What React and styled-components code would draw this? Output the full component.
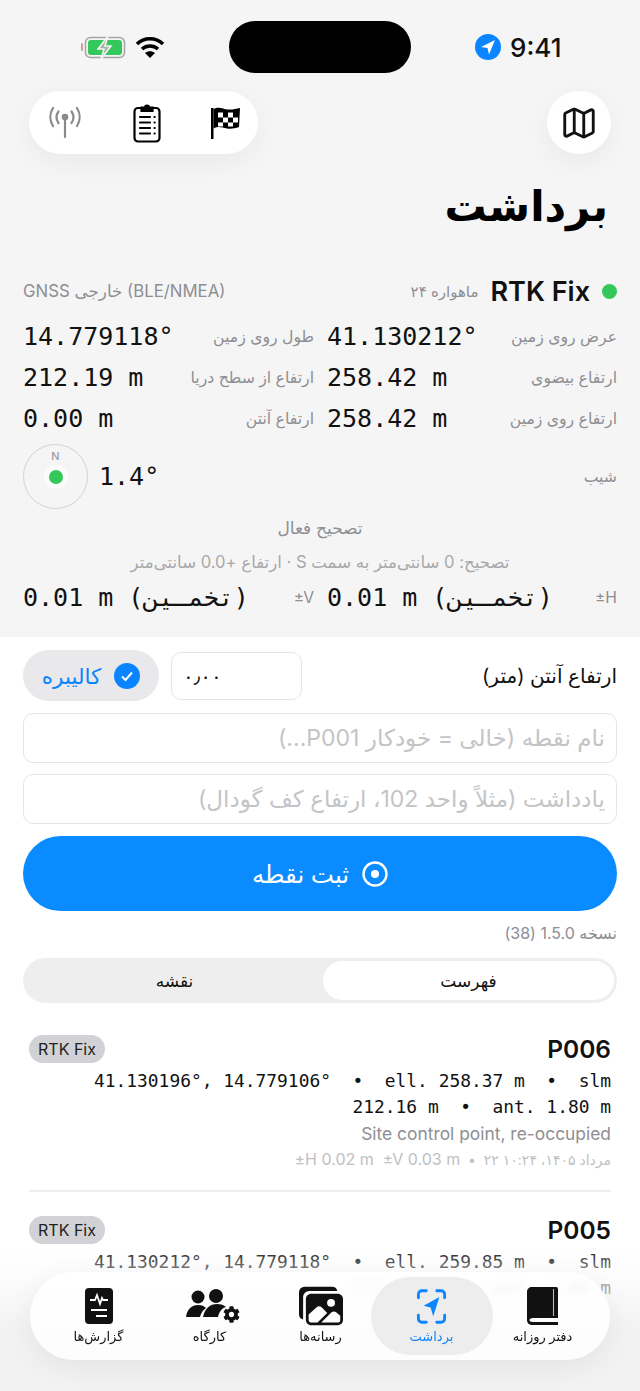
import React from "react";
import styled, { createGlobalStyle } from "styled-components";
import { FaCog } from "react-icons/fa";
import { IoImages } from "react-icons/io5";
import { LuMap } from "react-icons/lu";

const sans = `Inter, "DejaVu Sans", sans-serif`;
const mono = `"DejaVu Sans Mono", "Liberation Mono", monospace`;

const GlobalStyle = createGlobalStyle`
  html, body { margin: 0; padding: 0; background: #fff; }
  * { box-sizing: border-box; }
  input::placeholder { color: #c4c4c6; opacity: 1; }
`;

const Screen = styled.div`
  position: relative;
  width: 640px;
  height: 1391px;
  overflow: hidden;
  background: #fff;
  font-family: ${sans};
  direction: rtl;
`;

const Top = styled.div`
  height: 637px;
  background: #f5f5f5;
  padding: 0 23px;
`;

const StatusBar = styled.div`
  direction: ltr;
  height: 91px;
  display: flex;
  justify-content: center;
  align-items: flex-start;
  padding-top: 21px;
`;

const StatusSide = styled.div`
  width: 206px;
  height: 52px;
  display: flex;
  align-items: center;
  gap: ${(p) => p.$gap}px;
  padding-left: ${(p) => p.$pad}px;
`;

const Island = styled.div`
  width: 182px;
  height: 52px;
  border-radius: 26px;
  background: #000;
`;

const Clock = styled.span`
  font-size: 26px;
  font-weight: 500;
  color: #111;
`;

const NavRow = styled.div`
  direction: ltr;
  display: flex;
  justify-content: space-between;
  padding: 0 6px;
  height: 63px;
`;

const NavPill = styled.div`
  width: 229px;
  height: 63px;
  border-radius: 32px;
  background: #fff;
  box-shadow: 0 8px 28px rgba(0, 0, 0, 0.05);
  display: flex;
  align-items: center;
  justify-content: space-between;
  padding: 0 17px 0 18px;
`;

const NavCircle = styled(NavPill)`
  width: 64px;
  justify-content: center;
  padding: 0;
`;

const Title = styled.h1`
  margin: 17px 9px 0 0;
  height: 70px;
  line-height: 70px;
  font-size: 42px;
  font-weight: 700;
  color: #000;
`;

const FixRow = styled.div`
  margin-top: 33px;
  height: 34px;
  display: flex;
  align-items: center;
`;

const Dot = styled.span`
  width: 15px;
  height: 15px;
  border-radius: 50%;
  background: #34c759;
  margin-left: 12px;
`;

const FixName = styled.span`
  direction: ltr;
  font-size: 27px;
  font-weight: 600;
  color: #111;
  margin-left: 12px;
`;

const Muted = styled.span`
  font-size: 15px;
  color: #8e8e93;
`;

const Source = styled(Muted)`
  margin-right: auto;
  font-size: 16.800px;
`;

const Grid = styled.div`
  margin-top: ${(p) => p.$top}px;
  display: grid;
  grid-template-columns: 290px 291px;
  column-gap: 13px;
  grid-auto-rows: 41px;
`;

const Cell = styled.div`
  display: flex;
  justify-content: space-between;
  align-items: center;
`;

const Label = styled.span`
  font-size: 15.700px;
  color: #8e8e93;
`;

const Value = styled.span`
  direction: ltr;
  font-family: ${mono};
  font-size: 25px;
  color: #111;
  white-space: pre;
`;

const ValueSlot = styled(Value)`
  width: 150px;
  flex: none;
  text-align: left;
`;

const TiltRow = styled.div`
  height: 65px;
  margin-top: 5px;
  display: flex;
  justify-content: space-between;
  align-items: center;
`;

const TiltValue = styled.div`
  direction: ltr;
  display: flex;
  align-items: center;
  gap: 11px;
`;

const Compass = styled.div`
  position: relative;
  width: 65px;
  height: 65px;
  border-radius: 50%;
  border: 1.5px solid #d2d2d4;
  display: flex;
  align-items: center;
  justify-content: center;
`;

const CompassN = styled.span`
  position: absolute;
  top: 4px;
  left: 0;
  right: 0;
  text-align: center;
  font-size: 11px;
  color: #8e8e93;
`;

const CompassDot = styled.span`
  width: 14px;
  height: 14px;
  border-radius: 50%;
  background: #34c759;
  box-shadow: 0 0 0 5px #fbfbfb;
`;

const Center = styled.div`
  text-align: center;
  font-size: ${(p) => p.$size}px;
  color: ${(p) => p.$color};
  margin-top: ${(p) => p.$top}px;
  line-height: 22px;
`;

const Body = styled.div`
  padding: 13px 23px 0;
`;

const AntennaRow = styled.div`
  display: flex;
  align-items: center;
  height: 51px;
`;

const FieldLabel = styled.span`
  font-size: 20px;
  color: #111;
  margin-left: auto;
`;

const SmallInput = styled.input`
  width: 131px;
  height: 48px;
  border: 1px solid #e5e5e7;
  border-radius: 10px;
  background: #fff;
  padding: 0 11px;
  direction: ltr;
  text-align: left;
  font-size: 20px;
  font-family: ${sans};
  color: #111;
  outline: none;
`;

const CalibrateBtn = styled.button`
  margin-right: 12px;
  width: 136px;
  height: 51px;
  border: none;
  border-radius: 26px;
  background: #e9e9eb;
  display: flex;
  align-items: center;
  justify-content: center;
  gap: 13px;
  color: #0a84ff;
  font-family: ${sans};
  font-size: 21.500px;
`;

const TextInput = styled.input`
  display: block;
  width: 100%;
  height: 50px;
  margin-top: ${(p) => p.$top}px;
  border: 1px solid #e5e5e7;
  border-radius: 10px;
  background: #fff;
  padding: 0 11px;
  font-size: 23px;
  font-family: ${sans};
  outline: none;
`;

const SaveBtn = styled.button`
  margin-top: 12px;
  width: 100%;
  height: 75px;
  border: none;
  border-radius: 38px;
  background: #0a8bff;
  color: #fff;
  font-family: ${sans};
  font-size: 24.500px;
  font-weight: 500;
  display: flex;
  align-items: center;
  justify-content: center;
  gap: 13px;
`;

const Version = styled.div`
  margin-top: 12px;
  height: 20px;
  line-height: 20px;
  font-size: 16px;
  color: #8e8e93;
`;

const Segments = styled.div`
  margin-top: 15px;
  height: 45px;
  border-radius: 23px;
  background: #eeeeef;
  padding: 3px;
  display: grid;
  grid-template-columns: 291px 1fr;
`;

const Segment = styled.div`
  border-radius: 20px;
  background: ${(p) => (p.$active ? "#fff" : "transparent")};
  display: flex;
  align-items: center;
  justify-content: center;
  font-size: 17px;
  font-weight: ${(p) => (p.$active ? 500 : 400)};
  color: #111;
`;

const Item = styled.div`
  margin: 0 6px;
  padding-top: ${(p) => p.$top}px;
  padding-bottom: 18px;
  border-bottom: ${(p) => (p.$line ? "2px solid #eeeeef" : "none")};
`;

const ItemHead = styled.div`
  display: flex;
  justify-content: space-between;
  align-items: center;
  height: 28px;
`;

const ItemName = styled.span`
  font-size: 24.500px;
  font-weight: 600;
  color: #111;
`;

const FixTag = styled.span`
  direction: ltr;
  width: 76px;
  height: 28px;
  border-radius: 14px;
  background: #d1d1d6;
  font-size: 16px;
  color: #222;
  display: flex;
  align-items: center;
  justify-content: center;
`;

const Coords = styled.div`
  direction: ltr;
  text-align: right;
  margin-top: 5px;
  font-family: ${mono};
  font-size: 17.900px;
  line-height: 26px;
  color: #111;
  white-space: pre-wrap;
`;

const Note = styled.div`
  direction: ltr;
  text-align: right;
  font-size: 17.400px;
  line-height: 27px;
  color: #8e8e93;
`;

const Meta = styled.div`
  font-size: 14px;
  line-height: 24px;
  color: #c0c0c2;
  white-space: pre;
`;

const Ltr = styled.span`
  direction: ltr;
  unicode-bidi: isolate;
`;

const MetaAcc = styled(Ltr)`
  font-size: 16px;
`;

const BottomFade = styled.div`
  position: absolute;
  left: 0;
  right: 0;
  bottom: 0;
  height: 145px;
  background: linear-gradient(rgba(255, 255, 255, 0), rgba(250, 250, 250, 0.55) 20%, #f2f2f2 60%);
  pointer-events: none;
`;

const TabBar = styled.div`
  position: absolute;
  left: 30px;
  top: 1272px;
  width: 580px;
  height: 88px;
  border-radius: 44px;
  background: rgba(255, 255, 255, 0.84);
  backdrop-filter: blur(4px);
  box-shadow: 0 8px 30px rgba(0, 0, 0, 0.06);
  display: flex;
  align-items: center;
  padding: 0 12px;
`;

const Tab = styled.div`
  width: ${(p) => (p.$active ? 122 : 111)}px;
  margin: 0 ${(p) => (p.$active ? -5.5 : 0)}px;
  height: 78px;
  border-radius: 39px;
  background: ${(p) => (p.$active ? "#ededed" : "transparent")};
  color: ${(p) => (p.$active ? "#0a84ff" : "#111")};
  display: flex;
  flex-direction: column;
  align-items: center;
  justify-content: flex-end;
  padding-bottom: 11px;
  font-size: 13px;
  font-weight: 500;
`;

const TabIcon = styled.div`
  height: 44px;
  display: flex;
  align-items: center;
  justify-content: center;
`;

const TeamWrap = styled.div`
  position: relative;
  width: 54px;
  height: 34px;
  margin-right: -6px;
  direction: ltr;
  & > svg:last-child {
    position: absolute;
    right: 0;
    bottom: 0;
  }
`;

const Battery = () => (
  <svg width="46" height="26" viewBox="0 0 46 26">
    <path d="M2 10v6" stroke="#c9a0a0" strokeWidth="2" strokeLinecap="round" />
    <rect x="5.5" y="3.5" width="39" height="20" rx="5" fill="none" stroke="#a5a5a5" strokeWidth="1.5" />
    <rect x="8" y="6" width="34" height="15" rx="3" fill="#34c759" />
    <path d="M28 2 18 15h6l-3 10 10-13h-6z" fill="#a9b5ac" stroke="#f5f5f5" strokeWidth="1.5" />
  </svg>
);

const Wifi = () => (
  <svg width="30" height="26" viewBox="0 0 30 26" fill="none" stroke="#000" strokeWidth="3.4">
    <path d="M2 10c7-7 19-7 26 0" />
    <path d="M7 15c4.500-4 11.500-4 16 0" />
    <path d="M15 24l-5-5c3-2.300 7-2.300 10 0z" fill="#000" stroke="none" />
  </svg>
);

const LocationBadge = () => (
  <svg width="26" height="26" viewBox="0 0 26 26">
    <circle cx="13" cy="13" r="13" fill="#0a84ff" />
    <path d="M20 6 6 13l6.500 1 1.500 6.500z" fill="#fff" />
  </svg>
);

const Antenna = () => (
  <svg width="36" height="36" viewBox="0 0 36 36" fill="none" stroke="#8a8a8e" strokeWidth="2.200" strokeLinecap="round">
    <path d="M18 12v20" />
    <circle cx="18" cy="12" r="2.200" fill="#8a8a8e" />
    <path d="M11.500 18c-2.500-3.500-2.500-8 0-11.500M24.500 18c2.500-3.500 2.500-8 0-11.500" />
    <path d="M6 21C2.500 15.500 2.500 8.500 6 3M30 21c3.500-5.500 3.500-12.500 0-18" />
  </svg>
);

const Clipboard = () => (
  <svg width="30" height="40" viewBox="0 0 30 40" fill="none" stroke="#000" strokeWidth="2.200" strokeLinecap="round">
    <rect x="2.500" y="5" width="25" height="33.500" rx="3.500" />
    <path d="M9.500 8V4.500h3.500a2 2 0 0 1 4 0h3.500V8z" fill="#000" />
    <path d="M8 14h10M8 19.500h10M8 25h10M8 30.500h10" />
    <path d="M22.500 14h.2M22.500 19.500h.2M22.500 25h.2M22.500 30.500h.2" />
  </svg>
);

const CheckerFlag = () => (
  <svg width="30" height="32" viewBox="0 0 30 32">
    <path d="M0 1h2.500v31H0z" fill="#000" />
    <path d="M2.500 2C8-1 12 2 17 2.500c4 .4 8-.5 12-1.500l-1 19c-4 1.500-8 2-12 1.500-5-.8-8-3-13.500 0z" fill="#000" />
    <path d="M7 5.500h5v5H7zM17 5.500h5v5h-5zM12 10.500h5v5h-5zM22 10.500h5v5h-5zM7 15.500h5v4H7zM17 15.500h5v4h-5z" fill="#fff" />
  </svg>
);

const ReportIcon = () => (
  <svg width="28" height="36" viewBox="0 0 28 36">
    <rect width="28" height="36" rx="4" fill="#111" />
    <path d="M5 12h5l2-5 3 9 2-6 1 2h5" fill="none" stroke="#fff" strokeWidth="1.800" />
    <path d="M6 22h16M11 28h11" stroke="#fff" strokeWidth="2" />
  </svg>
);

const TeamIcon = () => (
  <TeamWrap>
    <svg width="54" height="34" viewBox="0 0 54 34">
      <circle cx="12" cy="8" r="6.500" fill="#111" />
      <circle cx="30" cy="7" r="7" fill="#111" />
      <path d="M0 28c1-8 6-12 12-12 4 0 6 1 8 3-3 2-5 5-6 9z" fill="#111" />
      <path d="M17 28c2-9 7-13 14-13 4 0 7 1 9 3-4 1-7 5-8 10z" fill="#111" />
    </svg>
    <FaCog size={17} color="#111" />
  </TeamWrap>
);

const FocusNav = () => (
  <svg width="33" height="35" viewBox="0 0 34 40" fill="none" stroke="#0a84ff" strokeWidth="3.200" strokeLinecap="round">
    <path d="M2 10V6a4 4 0 0 1 4-4h5M23 2h5a4 4 0 0 1 4 4v4M32 30v4a4 4 0 0 1-4 4h-5M11 38H6a4 4 0 0 1-4-4v-4" />
    <path d="M26 9 8 19l8 2 3 10z" fill="#0a84ff" stroke="none" />
  </svg>
);

const BookIcon = () => (
  <svg width="31" height="38" viewBox="0 0 31 38">
    <path d="M5 0h24a2 2 0 0 1 2 2v29H6c-2.500 0-3.500 1-3.500 2s1 2 3.500 2h25v3H6c-4 0-6-2-6-5V5c0-3 2-5 5-5z" fill="#111" />
    <path d="M26.500 2v27" stroke="#fff" strokeWidth="1.100" opacity=".7" />
  </svg>
);

const tabs = [
  { label: "دفتر روزانه", icon: <BookIcon /> },
  { label: "برداشت", icon: <FocusNav />, active: true },
  { label: "رسانه‌ها", icon: <IoImages size={44} color="#111" /> },
  { label: "کارگاه", icon: <TeamIcon /> },
  { label: "گزارش‌ها", icon: <ReportIcon /> },
];

const rows = [
  ["عرض روی زمین", "41.130212°", "طول روی زمین", "14.779118°"],
  ["ارتفاع بیضوی", "258.42 m", "ارتفاع از سطح دریا", "212.19 m"],
  ["ارتفاع روی زمین", "258.42 m", "ارتفاع آنتن", "0.00 m"],
];

const points = [
  {
    name: "P006",
    coords: "41.130196°, 14.779106°  •  ell. 258.37 m  •  slm 212.16 m  •  ant. 1.80 m",
    note: "Site control point, re-occupied",
    date: "مرداد ۱۴۰۵، ۱۰:۲۴ ۲۲  •  ",
    acc: "±H 0.02 m  ±V 0.03 m",
  },
  {
    name: "P005",
    coords: "41.130212°, 14.779118°  •  ell. 259.85 m  •  slm 212.19 m  •  ant. 1.80 m",
    note: "",
    date: "",
    acc: "",
  },
];

const App = () => {
  return (
    <Screen>
      <GlobalStyle />
      <Top>
        <StatusBar>
          <StatusSide $gap={9} $pad={57}>
            <Battery />
            <Wifi />
          </StatusSide>
          <Island />
          <StatusSide $gap={9} $pad={64}>
            <LocationBadge />
            <Clock>9:41</Clock>
          </StatusSide>
        </StatusBar>

        <NavRow>
          <NavPill>
            <Antenna />
            <Clipboard />
            <CheckerFlag />
          </NavPill>
          <NavCircle>
            <LuMap size={38} color="#111" strokeWidth={1.8} />
          </NavCircle>
        </NavRow>

        <Title>برداشت</Title>

        <FixRow>
          <Dot />
          <FixName>RTK Fix</FixName>
          <Muted>ماهواره ۲۴</Muted>
          <Source><Ltr>(BLE/NMEA)</Ltr> خارجی <Ltr>GNSS</Ltr></Source>
        </FixRow>

        <Grid $top={8}>
          {rows.map((row) => (
            <React.Fragment key={row[0]}>
              <Cell>
                <Label>{row[0]}</Label>
                <ValueSlot>{row[1]}</ValueSlot>
              </Cell>
              <Cell>
                <Label>{row[2]}</Label>
                <ValueSlot>{row[3]}</ValueSlot>
              </Cell>
            </React.Fragment>
          ))}
        </Grid>

        <TiltRow>
          <Label>شیب</Label>
          <TiltValue>
            <Compass>
              <CompassN>N</CompassN>
              <CompassDot />
            </Compass>
            <Value>1.4°</Value>
          </TiltValue>
        </TiltRow>

        <Center $color="#8e8e93" $top={8} $size={17}>تصحیح فعال</Center>
        <Center $color="#a8a8aa" $top={12} $size={16.6}>تصحیح: 0 سانتی‌متر به سمت S · ارتفاع +0.0 سانتی‌متر</Center>

        <Grid $top={4}>
          <Cell>
            <Label><Ltr>±H</Ltr></Label>
            <Value>0.01 m (تخمـین)</Value>
          </Cell>
          <Cell>
            <Label><Ltr>±V</Ltr></Label>
            <Value>0.01 m (تخمـین)</Value>
          </Cell>
        </Grid>
      </Top>

      <Body>
        <AntennaRow>
          <FieldLabel>ارتفاع آنتن (متر)</FieldLabel>
          <SmallInput defaultValue="۰٫۰۰" />
          <CalibrateBtn>
            <svg width="26" height="26" viewBox="0 0 26 26">
              <circle cx="13" cy="13" r="13" fill="#0a84ff" />
              <path d="M8 13.500l3.500 3.500L18 9.500" fill="none" stroke="#fff" strokeWidth="2" />
            </svg>
            کالیبره
          </CalibrateBtn>
        </AntennaRow>
        <TextInput $top={12} placeholder="نام نقطه (خالی = خودکار P001...)" />
        <TextInput $top={11} placeholder="یادداشت (مثلاً واحد 102، ارتفاع کف گودال)" />
        <SaveBtn>
          <svg width="26" height="26" viewBox="0 0 26 26">
            <circle cx="13" cy="13" r="11.500" fill="none" stroke="#fff" strokeWidth="2.400" />
            <circle cx="13" cy="13" r="4" fill="#fff" />
          </svg>
          ثبت نقطه
        </SaveBtn>
        <Version>نسخه 1.5.0 (38)</Version>
        <Segments>
          <Segment $active>فهرست</Segment>
          <Segment>نقشه</Segment>
        </Segments>

        {points.map((point, idx) => (
          <Item key={point.name} $top={idx === 0 ? 32 : 24} $line={idx === 0}>
            <ItemHead>
              <ItemName>{point.name}</ItemName>
              <FixTag>RTK Fix</FixTag>
            </ItemHead>
            <Coords>{point.coords}</Coords>
            {point.note && <Note>{point.note}</Note>}
            {point.date && (
              <Meta>
                {point.date}
                <MetaAcc>{point.acc}</MetaAcc>
              </Meta>
            )}
          </Item>
        ))}
      </Body>

      <BottomFade />
      <TabBar>
        {tabs.map((tab) => (
          <Tab key={tab.label} $active={tab.active}>
            <TabIcon>{tab.icon}</TabIcon>
            {tab.label}
          </Tab>
        ))}
      </TabBar>
    </Screen>
  );
};

export default App;
